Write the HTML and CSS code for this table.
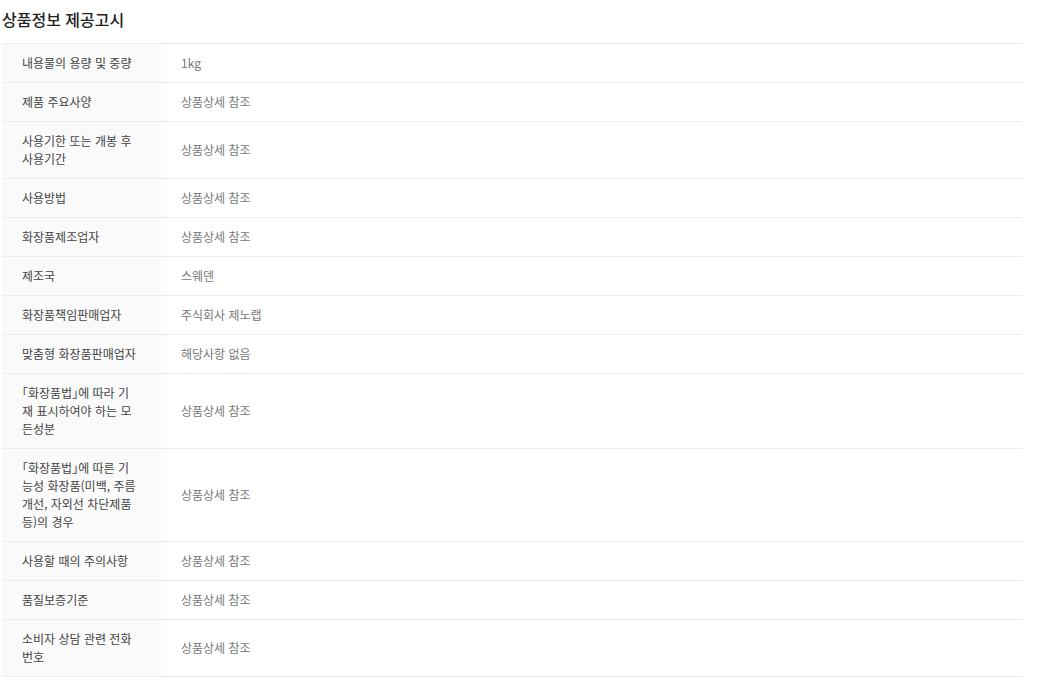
FILE: index.html
```
<html lang="ko">
<head>
  <meta charset="UTF-8" />
  <meta name="viewport" content="width=device-width, initial-scale=1.0" />
  <title>상품정보 제공고시</title>
  <link rel="stylesheet" href="styles.css">
</head>
<body>
  <div class="notice">
    <h3 class="notice-title">상품정보 제공고시</h3>
    <table class="notice-table">
      <tbody>
        <tr><th>내용물의 용량 및 중량</th><td>1kg</td></tr>
        <tr><th>제품 주요사양</th><td>상품상세 참조</td></tr>
        <tr><th>사용기한 또는 개봉 후 사용기간</th><td>상품상세 참조</td></tr>
        <tr><th>사용방법</th><td>상품상세 참조</td></tr>
        <tr><th>화장품제조업자</th><td>상품상세 참조</td></tr>
        <tr><th>제조국</th><td>스웨덴</td></tr>
        <tr><th>화장품책임판매업자</th><td>주식회사 제노랩</td></tr>
        <tr><th>맞춤형 화장품판매업자</th><td>해당사항 없음</td></tr>
        <tr><th>「화장품법」에 따라 기재 표시하여야 하는 모든성분</th><td>상품상세 참조</td></tr>
        <tr><th>「화장품법」에 따른 기능성 화장품(미백, 주름개선, 자외선 차단제품 등)의 경우</th><td>상품상세 참조</td></tr>
        <tr><th>사용할 때의 주의사항</th><td>상품상세 참조</td></tr>
        <tr><th>품질보증기준</th><td>상품상세 참조</td></tr>
        <tr><th>소비자 상담 관련 전화번호</th><td>상품상세 참조</td></tr>
      </tbody>
    </table>
  </div>
</body>
</html>
```

FILE: styles.css
```
body {
  margin: 0;
  padding: 0;
  background: #fff;
  font-family: "Noto Sans CJK KR", "Noto Sans", sans-serif;
  color: #333;
}

.notice {
  width: 1020px;
  padding: 0 0 0 2px;
}

.notice-title {
  margin: 0;
  padding: 9px 0 13px;
  font-size: 16px;
  line-height: 21px;
  font-weight: 500;
  color: #222;
}

.notice-table {
  width: 100%;
  border-collapse: collapse;
  border-top: 1px solid #ebebeb;
}

.notice-table th,
.notice-table td {
  padding: 10px 20px;
  font-size: 12px;
  line-height: 18px;
  font-weight: normal;
  text-align: left;
  vertical-align: middle;
  border-bottom: 1px solid #ebebeb;
}

.notice-table th {
  width: 117px;
  padding-right: 22px;
  background: #fafafa;
  color: #444;
  word-break: break-all;
  font-feature-settings: "halt";
}

.notice-table td {
  color: #777;
}
```
